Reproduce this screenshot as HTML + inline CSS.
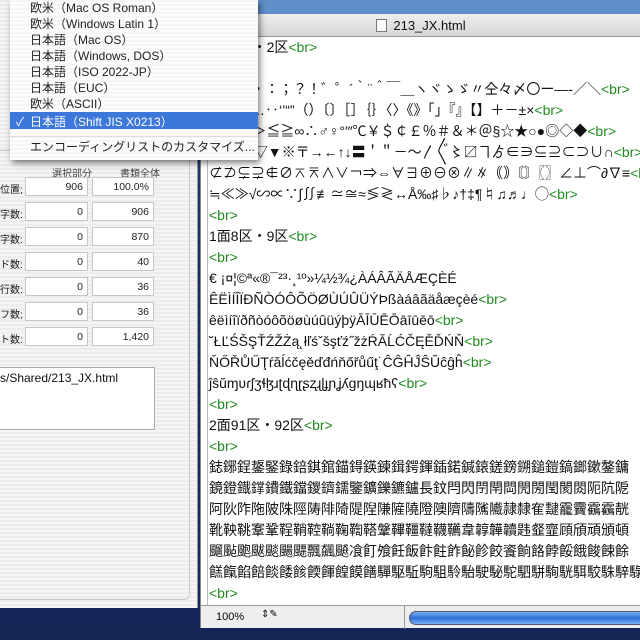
<!DOCTYPE html>
<html><head><meta charset="utf-8"><style>
*{margin:0;padding:0;box-sizing:border-box}
body{width:640px;height:640px;overflow:hidden;position:relative;background:linear-gradient(#2a4a8a,#1a2f66 40%,#142656);font-family:"Liberation Sans","Noto Sans CJK JP",sans-serif}
.top{position:absolute;left:0;top:0;width:640px;height:16px;background:#5f8fc8}
.lw{position:absolute;left:0;top:0;width:198px;height:608px;background:repeating-linear-gradient(#ececec 0 2px,#f4f4f4 2px 4px);border-right:1px solid #999}
.lw .inner{position:absolute;left:0;top:150px;width:190px;height:450px;border:1px solid #c8c8c8;border-left:none;border-radius:0 0 6px 0}
.row{position:absolute;left:0;font-size:10px;color:#222;width:160px;height:20px}
.row .lab{position:absolute;left:0;top:4px}
.f{position:absolute;top:0;height:19px;background:#fff;border:1px solid #c6c6c6;font-size:10.5px;text-align:right;padding:3px 4px;color:#222}
.hdr{position:absolute;font-size:10px;color:#444;top:165px}
.path{position:absolute;left:0;top:367px;width:155px;height:63px;background:#fff;border:1px solid #aaa;border-left:none;font-size:12px;padding:3px 0 0 0;color:#111}
.menu{position:absolute;left:10px;top:0;width:248px;height:160px;background:repeating-linear-gradient(#f6f6f6 0 2px,#fdfdfd 2px 4px);box-shadow:2px 3px 6px rgba(0,0,0,.5);font-size:12px;color:#222;z-index:5}
.mi{position:absolute;left:20px;height:16px;line-height:16px}
.sel{position:absolute;left:0;top:112px;width:248px;height:17px;background:#3d77d9;color:#fff}
.rw{position:absolute;left:200px;top:14px;width:440px;height:614px;background:#fff;border-left:1px solid #888}
.tb{position:absolute;left:0;top:0;width:440px;height:23px;background:linear-gradient(#eee,#d6d6d6);border-bottom:1px solid #999;font-size:13px;text-align:center;line-height:23px;color:#111}
.ed{position:absolute;left:6px;top:23px;width:434px;height:568px;overflow:hidden;font-size:14px;line-height:21px;color:#111;white-space:nowrap;border-left:1px solid #bbb;padding-left:1px;padding-top:0}
.g{color:#1f8a1f}
.sb{position:absolute;left:0;top:591px;width:440px;height:23px;background:#eee;border-top:1px solid #999;font-size:11px}
.prog{position:absolute;left:208px;top:5px;width:240px;height:14px;border-radius:7px;background:linear-gradient(#7ab0f0,#2d6fd6 50%,#7ab0f0);border:1px solid #557}
</style></head><body>
<div class="top"></div>
<div class="lw">
 <div class="inner"></div>
 <div class="hdr" style="left:52px">選択部分</div>
 <div class="hdr" style="left:120px">書類全体</div>
 <div class="row" style="top:177px"><span class="lab">位置;</span><div class="f" style="left:25px;width:63px">906</div><div class="f" style="left:92px;width:62px">100.0%</div></div>
 <div class="row" style="top:202px"><span class="lab">字数:</span><div class="f" style="left:25px;width:63px">0</div><div class="f" style="left:92px;width:62px">906</div></div>
 <div class="row" style="top:227px"><span class="lab">字数:</span><div class="f" style="left:25px;width:63px">0</div><div class="f" style="left:92px;width:62px">870</div></div>
 <div class="row" style="top:252px"><span class="lab">ド数:</span><div class="f" style="left:25px;width:63px">0</div><div class="f" style="left:92px;width:62px">40</div></div>
 <div class="row" style="top:277px"><span class="lab">行数:</span><div class="f" style="left:25px;width:63px">0</div><div class="f" style="left:92px;width:62px">36</div></div>
 <div class="row" style="top:302px"><span class="lab">フ数;</span><div class="f" style="left:25px;width:63px">0</div><div class="f" style="left:92px;width:62px">36</div></div>
 <div class="row" style="top:327px"><span class="lab">ト数:</span><div class="f" style="left:25px;width:63px">0</div><div class="f" style="left:92px;width:62px">1,420</div></div>
 <div class="path">s/Shared/213_JX.html</div>
</div>
<div class="menu">
 <div class="mi" style="top:0">欧米（Mac OS Roman）</div>
 <div class="mi" style="top:16px">欧米（Windows Latin 1）</div>
 <div class="mi" style="top:32px">日本語（Mac OS）</div>
 <div class="mi" style="top:48px">日本語（Windows, DOS）</div>
 <div class="mi" style="top:64px">日本語（ISO 2022-JP）</div>
 <div class="mi" style="top:80px">日本語（EUC）</div>
 <div class="mi" style="top:96px">欧米（ASCII）</div>
 <div class="sel"><span style="position:absolute;left:6px;top:1px">✓</span><span style="position:absolute;left:20px;top:1px">日本語（Shift JIS X0213）</span></div>
 <div style="position:absolute;left:0;top:136px;width:248px;border-top:1px solid #ddd"></div>
 <div class="mi" style="top:139px">エンコーディングリストのカスタマイズ...</div>
</div>
<div class="rw">
 <div class="tb"><span style="display:inline-block;width:11px;height:13px;border:1px solid #777;background:#fafafa;vertical-align:-2px;margin-right:6px"></span>213_JX.html</div>
 <div class="ed">
1面1区・2区<span class="g">&lt;br&gt;</span><br>
&nbsp;<br>
　、。，．・：；？！゛゜´｀¨＾￣＿ヽヾゝゞ〃仝々〆〇ー―‐／＼<span class="g">&lt;br&gt;</span><br>
～∥｜…‥‘’“”（）〔〕［］｛｝〈〉《》「」『』【】＋－±×<span class="g">&lt;br&gt;</span><br>
÷＝≠＜＞≦≧∞∴♂♀°′″℃￥＄￠￡％＃＆＊＠§☆★○●◎◇◆<span class="g">&lt;br&gt;</span><br>
□■△▲▽▼※〒→←↑↓〓＇＂－～〳〴〵〻〼ヿゟ∈∋⊆⊇⊂⊃∪∩<span class="g">&lt;br&gt;</span><br>
⊄⊅⊊⊋∉∅⌅⌆∧∨￢⇒⇔∀∃⊕⊖⊗∥∦｟｠〘〙〖〗∠⊥⌒∂∇≡<span class="g">&lt;br&gt;</span><br>
≒≪≫√∽∝∵∫∬≢≃≅≈≶≷↔Å‰♯♭♪†‡¶♮♫♬♩◯<span class="g">&lt;br&gt;</span><br>
<span class="g">&lt;br&gt;</span><br>
1面8区・9区<span class="g">&lt;br&gt;</span><br>
<span class="g">&lt;br&gt;</span><br>
€ ¡¤¦©ª«­®¯²³·¸¹º»¼½¾¿ÀÁÂÃÄÅÆÇÈÉ<br>
ÊËÌÍÎÏÐÑÒÓÔÕÖØÙÚÛÜÝÞßàáâãäåæçèé<span class="g">&lt;br&gt;</span><br>
êëìíîïðñòóôõöøùúûüýþÿĀĪŪĒŌāīūēō<span class="g">&lt;br&gt;</span><br>
˘ŁĽŚŠŞŤŹŽŻą˛łľśˇšşťź˝žżŔĂĹĆČĘĚĎŃŇ<span class="g">&lt;br&gt;</span><br>
ŇŐŘŮŰŢŕăĺćčęěďđńňőřůűţ˙ĈĜĤĴŜŬĉĝĥ<span class="g">&lt;br&gt;</span><br>
ĵŝŭɱʋɾʃʒɬɮɹʈɖɳɽʂʐɻɭɟɲʝʎɡŋɰʁħʕ<span class="g">&lt;br&gt;</span><br>
<span class="g">&lt;br&gt;</span><br>
2面91区・92区<span class="g">&lt;br&gt;</span><br>
<span class="g">&lt;br&gt;</span><br>
鋕鋣鋥鋬鋻錄錇錤錧錨鍀鍈鍊鍓鍔鍕鍤鍩鍼鎄鎈鎊鎙鎚鎧鎬鎯鏉鏊鏞<br>
鏡鐙鐡鐣鐨鐵鐺鑁鑇鑐鑒鑛鑠鑣鑪長鈫閂閃閅閈閊閌閍閠閡閦阨阬阸<br>
阿阦阼陁陂陎陘陦陫陭隄隉隒隡隢隥隩隮隯隲隵隷隸隺靆靇靌靍靏靗<br>
靴鞅鞉鞌鞏鞓鞘鞚鞝鞠鞫鞳鞶鞸韁韃韈韉韋韕韡韥韪韰韲頋頎頑頒頓<br>
飀颭颮颰颷颺飃飄飆飇飡飣飧飪飯飰飳飵飶飻餃餈餉餎餑餒餓餕餗餘<br>
餻餼餡餢餤餧餩餪餫餭饃饍驒駆駈駒駔駖駘駛駜駝駟駢駨駫駬駮駯騂騄<span class="g">&lt;br&gt;</span><br>
<span class="g">&lt;br&gt;</span>
 </div>
 <div class="sb"><span style="position:absolute;left:15px;top:5px">100%</span><span style="position:absolute;left:60px;top:3px;font-size:10px">⇕✎</span><div style="position:absolute;left:203px;top:0;width:1px;height:23px;background:#999"></div><div class="prog"></div></div>
</div>
</body></html>
